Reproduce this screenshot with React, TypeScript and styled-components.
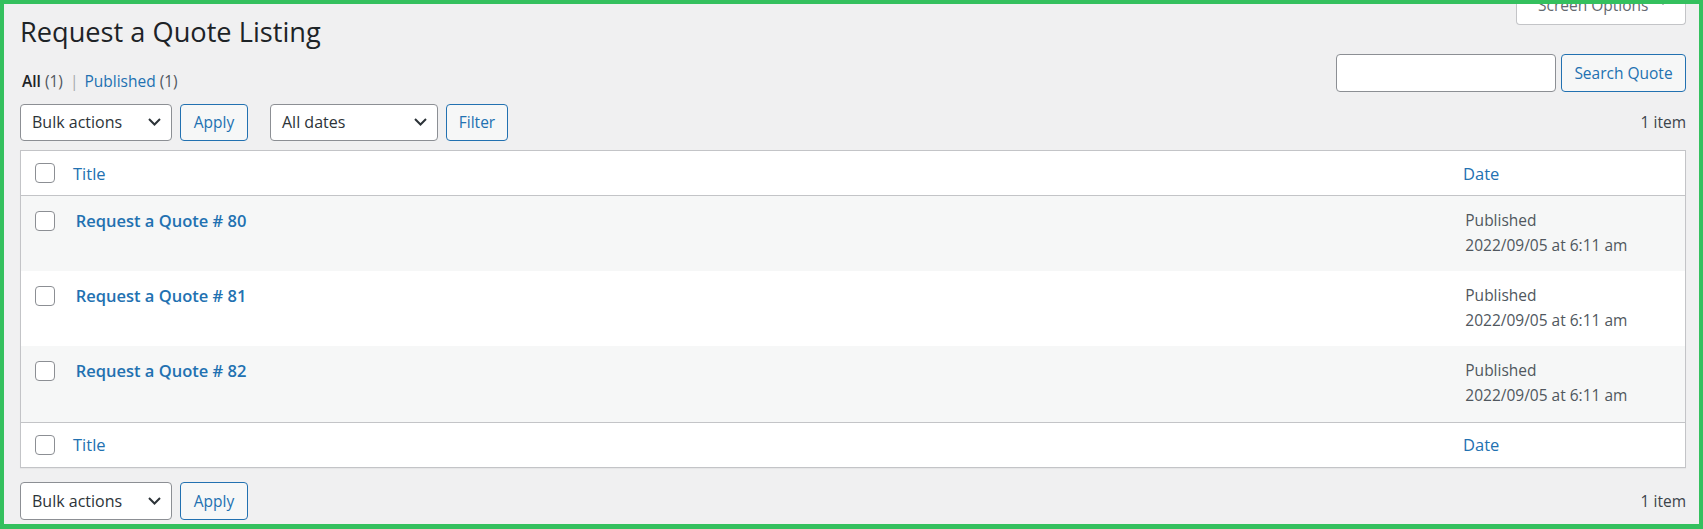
import styled, { createGlobalStyle } from "styled-components";

const GlobalStyle = createGlobalStyle`
  html, body {
    margin: 0;
    padding: 0;
    background: #f0f0f1;
  }
  body {
    font-family: "Open Sans", "Noto Sans", sans-serif;
    color: #3c434a;
  }
  * {
    box-sizing: border-box;
  }
`;

const Frame = styled.div`
  height: 529px;
  border: 4px solid #34c05e;
  border-bottom-width: 5px;
  background: #f0f0f1;
  overflow: hidden;
  padding: 0 13px 0 16px;
`;

const TopBar = styled.div`
  display: flex;
  justify-content: space-between;
  align-items: flex-start;
`;

const Title = styled.h1`
  margin: 9px 0 0 0;
  font-size: 27.2px;
  font-weight: 400;
  line-height: 37px;
  color: #1d2327;
`;

const ScreenOptions = styled.button`
  margin-top: -13px;
  height: 34px;
  width: 170px;
  padding: 2px 0 0 21px;
  display: flex;
  align-items: flex-start;
  gap: 11px;
  border: 1px solid #c3c4c7;
  border-top: none;
  border-radius: 0 0 4px 4px;
  background: #fff;
  color: #646970;
  font-family: inherit;
  font-size: 15.5px;
  line-height: 24px;

  svg {
    margin-top: 7px;
  }
`;

const FilterBar = styled.div`
  display: flex;
  justify-content: space-between;
  align-items: flex-start;
  margin-top: 4px;
`;

const Views = styled.div`
  display: flex;
  align-items: center;
  padding: 17px 0 0 2px;
  font-size: 15.5px;
  line-height: 20px;
  color: #50575e;
`;

const ViewLink = styled.a<{ $current?: boolean }>`
  color: ${(p) => (p.$current ? "#1d2327" : "#2271b1")};
  font-weight: ${(p) => (p.$current ? 600 : 400)};
  text-decoration: none;
`;

const Count = styled.span`
  color: #50575e;
  margin-left: 4px;
`;

const Sep = styled.span`
  color: #a7aaad;
  margin: 0 6px 0 7px;
`;

const SearchBox = styled.div`
  display: flex;
  gap: 5px;
`;

const SearchInput = styled.input`
  width: 220px;
  height: 37.5px;
  border: 1px solid #8c8f94;
  border-radius: 4px;
  background: #fff;
  font-family: inherit;
  font-size: 15.5px;
  padding: 0 10px;
`;

const Button = styled.button<{ $width: number }>`
  width: ${(p) => p.$width}px;
  height: 37.5px;
  border: 1px solid #2271b1;
  border-radius: 4px;
  background: #f6f7f7;
  color: #2271b1;
  font-family: inherit;
  font-size: 15.5px;
  padding: 0;
  cursor: pointer;
`;

const Tablenav = styled.div<{ $top: number }>`
  display: flex;
  align-items: center;
  height: 37.5px;
  margin-top: ${(p) => p.$top}px;
`;

const Actions = styled.div<{ $gap: number }>`
  display: flex;
  align-items: center;
  gap: 8px;
  margin-right: ${(p) => p.$gap}px;
`;

const Select = styled.div<{ $width: number }>`
  width: ${(p) => p.$width}px;
  height: 37.5px;
  display: flex;
  align-items: center;
  justify-content: space-between;
  padding: 0 10px 0 11px;
  border: 1px solid #8c8f94;
  border-radius: 4px;
  background: #fff;
  color: #2c3338;
  font-size: 16px;
`;

const ItemCount = styled.div`
  margin-left: auto;
  font-size: 15.5px;
  color: #3c434a;
`;

const Table = styled.div`
  margin-top: 9px;
  border: 1px solid #c3c4c7;
  background: #fff;
  box-shadow: 0 1px 1px rgba(0, 0, 0, 0.04);
`;

const HeadRow = styled.div<{ $foot?: boolean }>`
  display: grid;
  grid-template-columns: 40px 1fr 236px;
  align-items: center;
  height: 45px;
  border-top: ${(p) => (p.$foot ? "1px solid #c3c4c7" : "none")};
  border-bottom: ${(p) => (p.$foot ? "none" : "1px solid #c3c4c7")};
`;

const BodyRow = styled.div<{ $alt: boolean }>`
  display: grid;
  grid-template-columns: 40px 1fr 236px;
  align-items: start;
  height: 75.2px;
  padding-top: 12px;
  background: ${(p) => (p.$alt ? "#f6f7f7" : "#fff")};
`;

const CheckCell = styled.div<{ $body?: boolean }>`
  padding-left: 14px;
  padding-top: ${(p) => (p.$body ? 2.5 : 0)}px;
  display: flex;
`;

const Checkbox = styled.span`
  width: 20px;
  height: 20px;
  border: 1px solid #8c8f94;
  border-radius: 4px;
  background: #fff;
`;

const HeadCell = styled.div<{ $pad: number }>`
  padding-left: ${(p) => p.$pad}px;
  font-size: 16.5px;
  color: #2271b1;
`;

const RowTitle = styled.a`
  display: block;
  padding-left: 14.7px;
  font-size: 16.5px;
  line-height: 25px;
  font-weight: 600;
  color: #2271b1;
  text-decoration: none;
`;

const DateCell = styled.div`
  padding-left: 16.3px;
  font-size: 15.5px;
  line-height: 25px;
  color: #50575e;
`;

const Chevron = () => (
  <svg width="13" height="8" viewBox="0 0 13 8">
    <path d="M1 1l5.5 5.5L12 1" fill="none" stroke="#2c3338" strokeWidth="2" />
  </svg>
);

const Caret = () => (
  <svg width="8" height="5" viewBox="0 0 8 5">
    <path d="M0 0h8L4 5z" fill="#646970" />
  </svg>
);

const rows = [80, 81, 82];

const Nav = ({ top, full }: { top: number; full: boolean }) => (
  <Tablenav $top={top}>
    <Actions $gap={22}>
      <Select $width={152}>
        Bulk actions
        <Chevron />
      </Select>
      <Button $width={68}>Apply</Button>
    </Actions>
    {full && (
      <Actions $gap={0}>
        <Select $width={168}>
          All dates
          <Chevron />
        </Select>
        <Button $width={62}>Filter</Button>
      </Actions>
    )}
    <ItemCount>1 item</ItemCount>
  </Tablenav>
);

export default function App() {
  return (
    <>
      <GlobalStyle />
      <Frame>
        <TopBar>
          <Title>Request a Quote Listing</Title>
          <ScreenOptions>
            Screen Options
            <Caret />
          </ScreenOptions>
        </TopBar>
        <FilterBar>
          <Views>
            <ViewLink $current>All</ViewLink>
            <Count>(1)</Count>
            <Sep>|</Sep>
            <ViewLink>Published</ViewLink>
            <Count>(1)</Count>
          </Views>
          <SearchBox>
            <SearchInput type="search" />
            <Button $width={125}>Search Quote</Button>
          </SearchBox>
        </FilterBar>
        <Nav top={12} full />
        <Table>
          <HeadRow>
            <CheckCell>
              <Checkbox />
            </CheckCell>
            <HeadCell $pad={12}>Title</HeadCell>
            <HeadCell $pad={14}>Date</HeadCell>
          </HeadRow>
          {rows.map((n, i) => (
            <BodyRow key={n} $alt={i % 2 === 0}>
              <CheckCell $body>
                <Checkbox />
              </CheckCell>
              <RowTitle>Request a Quote # {n}</RowTitle>
              <DateCell>
                Published
                <br />
                2022/09/05 at 6:11 am
              </DateCell>
            </BodyRow>
          ))}
          <HeadRow $foot>
            <CheckCell>
              <Checkbox />
            </CheckCell>
            <HeadCell $pad={12}>Title</HeadCell>
            <HeadCell $pad={14}>Date</HeadCell>
          </HeadRow>
        </Table>
        <Nav top={14.5} full={false} />
      </Frame>
    </>
  );
}
